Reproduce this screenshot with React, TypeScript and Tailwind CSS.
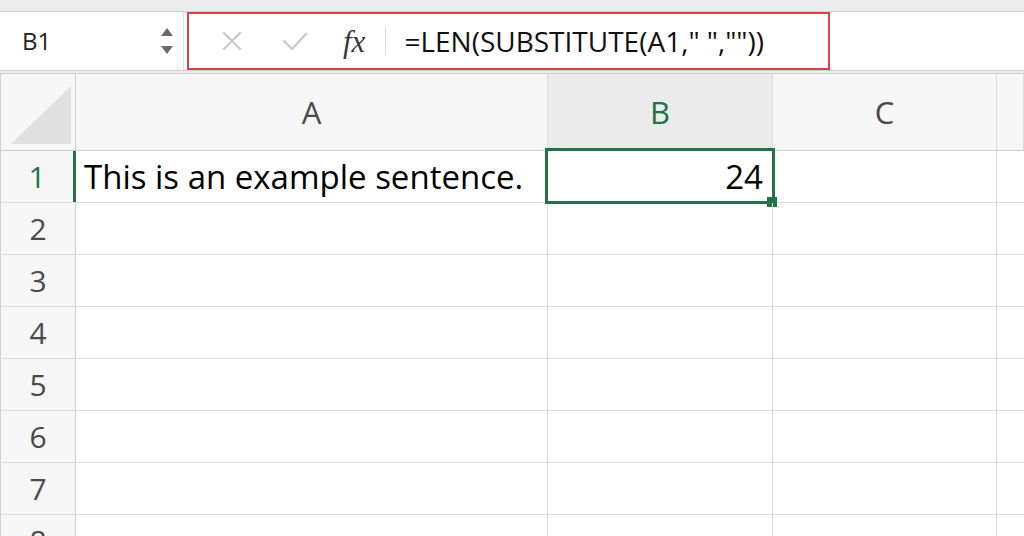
import React from 'react';

const cols = [
  { key: 'A', w: 'w-[472px]' },
  { key: 'B', w: 'w-[225px]' },
  { key: 'C', w: 'w-[224px]' },
  { key: 'D', w: 'flex-1' },
];

const rows = [1, 2, 3, 4, 5, 6, 7, 8];

export default function App() {
  return (
    <div className="w-[1024px] h-[536px] overflow-hidden bg-white flex flex-col" style={{ fontFamily: '"Open Sans", Lato, sans-serif' }}>
      {/* top strip */}
      <div className="h-[12px] bg-[#ececec] border-b border-[#d0d0d0] shrink-0" />

      {/* formula bar */}
      <div className="h-[58px] flex items-stretch bg-white shrink-0">
        <div className="w-[184px] flex items-center border-r border-[#e2e2e2]">
          <span className="ml-[22px] text-[24px] text-[#222]">B1</span>
          <div className="ml-auto mr-[10px] flex flex-col items-center gap-[10px]">
            <svg width="12" height="8" viewBox="0 0 12 8"><path d="M6 0 L12 8 L0 8 Z" fill="#6b6b6b" /></svg>
            <svg width="12" height="8" viewBox="0 0 12 8"><path d="M0 0 L12 0 L6 8 Z" fill="#6b6b6b" /></svg>
          </div>
        </div>
        <div className="ml-[3px] w-[643px] border-2 border-[#d8434b] flex items-center">
          <svg className="ml-[32px]" width="22" height="22" viewBox="0 0 22 22">
            <path d="M3 3 L19 19 M19 3 L3 19" stroke="#c9c9c9" strokeWidth="2.4" strokeLinecap="round" />
          </svg>
          <svg className="ml-[38px]" width="28" height="22" viewBox="0 0 28 22">
            <path d="M3 11 L11 19 L25 4" stroke="#c9c9c9" strokeWidth="2.4" fill="none" strokeLinecap="round" strokeLinejoin="round" />
          </svg>
          <span className="ml-[34px] text-[31px] italic text-[#3a3a3a] leading-none" style={{ fontFamily: '"Liberation Serif", serif' }}>fx</span>
          <div className="ml-[20px] w-px h-[28px] bg-[#dcdcdc]" />
          <span className="ml-[18px] text-[28px] text-[#111] whitespace-pre">=LEN(SUBSTITUTE(A1," ",""))</span>
        </div>
        <div className="flex-1" />
      </div>

      {/* divider */}
      <div className="h-[4px] bg-[#ececec] border-t border-b border-[#cfcfcf] shrink-0" />

      {/* grid */}
      <div className="flex-1 flex flex-col">
        {/* column header */}
        <div className="h-[77px] flex border-b border-[#cdcdcd] bg-[#f6f6f6] shrink-0">
          <div className="w-[76px] border-r border-[#cdcdcd] border-l border-l-[#d0d0d0] flex items-end justify-end pb-[6px] pr-[4px]">
            <svg width="60" height="58" viewBox="0 0 60 58"><path d="M60 0 L60 58 L0 58 Z" fill="#e0e0e0" /></svg>
          </div>
          {cols.map((c) => (
            <div
              key={c.key}
              className={`${c.w} border-r border-[#dcdcdc] flex items-center justify-center text-[31px] ${c.key === 'B' ? 'bg-[#ebebeb] text-[#217346]' : 'text-[#4a4a4a]'}`}
            >
              {c.key === 'D' ? '' : c.key}
            </div>
          ))}
        </div>

        {rows.map((r) => (
          <div key={r} className="h-[52px] flex border-b border-[#dadada] shrink-0">
            <div className={`w-[76px] bg-[#f6f6f6] border-l border-[#d0d0d0] flex items-center justify-center text-[30px] ${r === 1 ? 'text-[#217346] border-r-[3px] border-r-[#217346]' : 'text-[#4a4a4a] border-r border-r-[#cdcdcd]'}`}>
              {r}
            </div>
            <div className="w-[472px] border-r border-[#dadada] flex items-center pl-[8px] text-[33px] text-black whitespace-nowrap">
              {r === 1 ? 'This is an example sentence.' : ''}
            </div>
            <div className="w-[225px] border-r border-[#dadada] relative flex items-center justify-end pr-[9px] text-[33px] text-black">
              {r === 1 && (
                <>
                  24
                  <div className="absolute left-[-3px] top-[-3px] right-[-3px] bottom-[-2px] border-[3px] border-[#217346]" />
                  <div className="absolute right-[-5px] bottom-[-5px] w-[10px] h-[10px] bg-[#217346]" />
                </>
              )}
            </div>
            <div className="w-[224px] border-r border-[#dadada]" />
            <div className="flex-1" />
          </div>
        ))}
      </div>
    </div>
  );
}
